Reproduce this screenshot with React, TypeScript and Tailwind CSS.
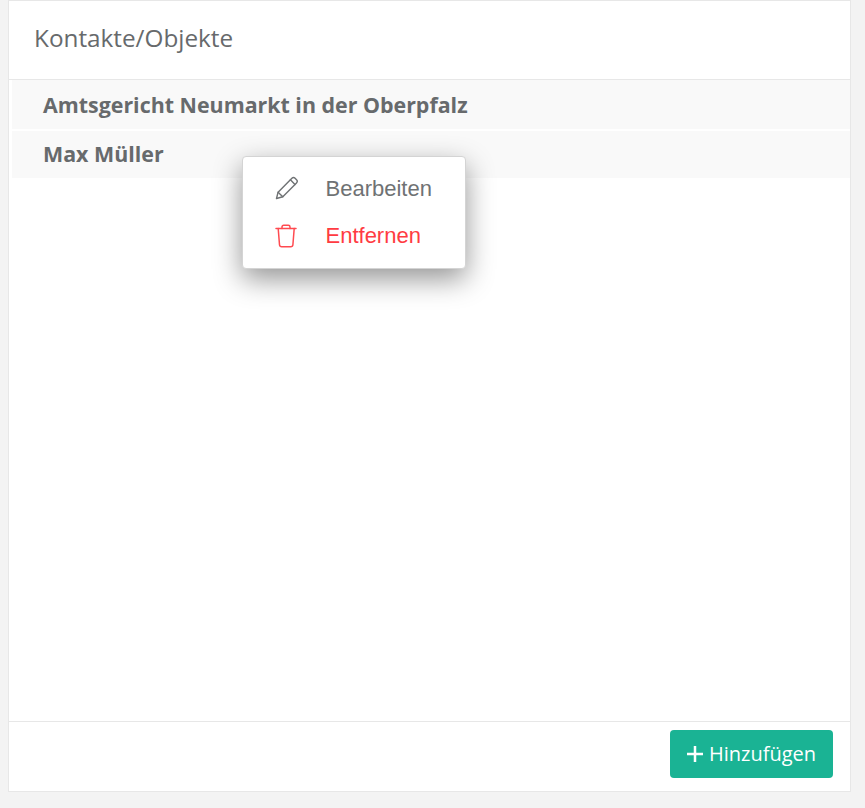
const rows = ['Amtsgericht Neumarkt in der Oberpfalz', 'Max Müller']

function PencilIcon() {
  return (
    <svg width="24" height="24" viewBox="0 0 24 24" fill="none" stroke="#6f7274" strokeWidth="1.4" strokeLinejoin="round" strokeLinecap="round">
      <path d="M1.5 22.5l1.6-6.3L16.9 2.3c.9-.9 2.3-.9 3.2 0l1.4 1.4c.9.9.9 2.3 0 3.2L7.8 20.8z" />
      <path d="M15.4 3.8l4.6 4.6M3.1 16.2l4.7 4.6" />
    </svg>
  )
}

function TrashIcon() {
  return (
    <svg width="22" height="24" viewBox="0 0 22 24" fill="none" stroke="#ff4a50" strokeWidth="1.5" strokeLinejoin="round" strokeLinecap="round">
      <path d="M1 4.500h20" />
      <path d="M7 4.500V3c0-1 .7-1.700 1.700-1.700h4.600c1 0 1.700.7 1.700 1.700v1.500" />
      <path d="M3.200 4.500l1.300 16.300c.1 1.200 1 2 2.200 2h9c1.200 0 2.100-.8 2.200-2l1.300-16.300" />
    </svg>
  )
}

export default function App() {
  return (
    <div className="h-[808px] bg-[#f3f3f3] pl-2 pr-[14px] pb-4 font-['Open_Sans',sans-serif]">
      <div className="relative flex h-full flex-col border border-[#e7e7e7] bg-white">
        <header className="flex h-[79px] items-center border-b border-[#e7e7e7] pl-[25px]">
          <h2 className="-mt-1 text-[24.300px] font-medium text-[#676a6c]">Kontakte/Objekte</h2>
        </header>

        <ul className="flex flex-1 flex-col pl-[3px]">
          <li className="flex h-[49px] items-center bg-[#f9f9f9] pt-0.5 pl-[31px] text-[21.400px] font-bold text-[#676a6c]">{rows[0]}</li>
          <li className="mt-0.5 flex h-[47px] items-center bg-[#f9f9f9] pl-[31px] text-[21.400px] font-bold text-[#676a6c]">{rows[1]}</li>
        </ul>

        <footer className="flex h-[70px] items-start justify-end border-t border-[#e7e7e7] pt-2 pr-[17px]">
          <button type="button" className="flex h-12 w-[163px] items-center justify-center gap-1.5 rounded bg-[#1ab394] text-xl text-white">
            <svg width="16" height="16" viewBox="0 0 16 16" fill="none" stroke="#fff" strokeWidth="2.500">
              <path d="M8 0v16M0 8h16" />
            </svg>
            Hinzufügen
          </button>
        </footer>

        <div className="absolute left-[233px] top-[155px] h-[113px] w-[224px] rounded border border-[#d4d4d4] bg-white font-['Liberation_Sans',sans-serif] text-[22px] shadow-[0_10px_28px_rgba(0,0,0,0.42)]">
          <div className="flex h-[55px] items-center pt-[7px] pl-[32px] text-[#6f7274]">
            <PencilIcon />
            <span className="ml-[26.500px]">Bearbeiten</span>
          </div>
          <div className="flex h-[47px] items-center pl-[32px] text-[#ff3b42]">
            <TrashIcon />
            <span className="ml-[28.500px]">Entfernen</span>
          </div>
        </div>
      </div>
    </div>
  )
}
